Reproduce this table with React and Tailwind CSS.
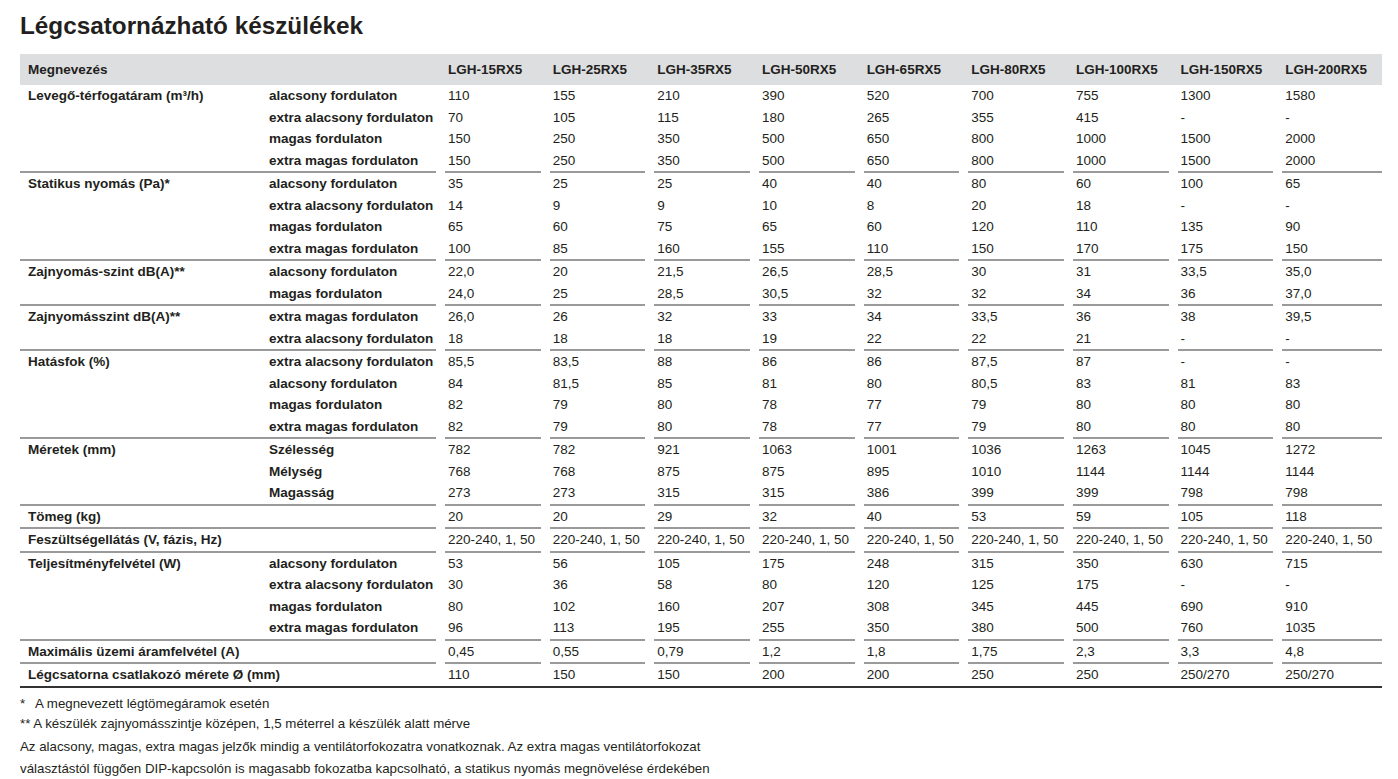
import React from "react";

const MODELS = [
  "LGH-15RX5",
  "LGH-25RX5",
  "LGH-35RX5",
  "LGH-50RX5",
  "LGH-65RX5",
  "LGH-80RX5",
  "LGH-100RX5",
  "LGH-150RX5",
  "LGH-200RX5",
];

const SPEEDS = [
  "alacsony fordulaton",
  "extra alacsony fordulaton",
  "magas fordulaton",
  "extra magas fordulaton",
];

// values: one array per model, in the order of the sub labels
const GROUPS = [
  {
    label: "Levegő-térfogatáram (m³/h)",
    subs: SPEEDS,
    values: [
      ["110", "70", "150", "150"],
      ["155", "105", "250", "250"],
      ["210", "115", "350", "350"],
      ["390", "180", "500", "500"],
      ["520", "265", "650", "650"],
      ["700", "355", "800", "800"],
      ["755", "415", "1000", "1000"],
      ["1300", "-", "1500", "1500"],
      ["1580", "-", "2000", "2000"],
    ],
  },
  {
    label: "Statikus nyomás (Pa)*",
    subs: SPEEDS,
    values: [
      ["35", "14", "65", "100"],
      ["25", "9", "60", "85"],
      ["25", "9", "75", "160"],
      ["40", "10", "65", "155"],
      ["40", "8", "60", "110"],
      ["80", "20", "120", "150"],
      ["60", "18", "110", "170"],
      ["100", "-", "135", "175"],
      ["65", "-", "90", "150"],
    ],
  },
  {
    label: "Zajnyomás-szint dB(A)**",
    subs: ["alacsony fordulaton", "magas fordulaton"],
    values: [
      ["22,0", "24,0"],
      ["20", "25"],
      ["21,5", "28,5"],
      ["26,5", "30,5"],
      ["28,5", "32"],
      ["30", "32"],
      ["31", "34"],
      ["33,5", "36"],
      ["35,0", "37,0"],
    ],
  },
  {
    label: "Zajnyomásszint dB(A)**",
    subs: ["extra magas fordulaton", "extra alacsony fordulaton"],
    values: [
      ["26,0", "18"],
      ["26", "18"],
      ["32", "18"],
      ["33", "19"],
      ["34", "22"],
      ["33,5", "22"],
      ["36", "21"],
      ["38", "-"],
      ["39,5", "-"],
    ],
  },
  {
    label: "Hatásfok (%)",
    subs: [
      "extra alacsony fordulaton",
      "alacsony fordulaton",
      "magas fordulaton",
      "extra magas fordulaton",
    ],
    values: [
      ["85,5", "84", "82", "82"],
      ["83,5", "81,5", "79", "79"],
      ["88", "85", "80", "80"],
      ["86", "81", "78", "78"],
      ["86", "80", "77", "77"],
      ["87,5", "80,5", "79", "79"],
      ["87", "83", "80", "80"],
      ["-", "81", "80", "80"],
      ["-", "83", "80", "80"],
    ],
  },
  {
    label: "Méretek (mm)",
    subs: ["Szélesség", "Mélység", "Magasság"],
    values: [
      ["782", "768", "273"],
      ["782", "768", "273"],
      ["921", "875", "315"],
      ["1063", "875", "315"],
      ["1001", "895", "386"],
      ["1036", "1010", "399"],
      ["1263", "1144", "399"],
      ["1045", "1144", "798"],
      ["1272", "1144", "798"],
    ],
  },
  {
    label: "Tömeg (kg)",
    subs: [],
    values: ["20", "20", "29", "32", "40", "53", "59", "105", "118"].map((v) => [v]),
  },
  {
    label: "Feszültségellátás (V, fázis, Hz)",
    subs: [],
    values: MODELS.map(() => ["220-240, 1, 50"]),
  },
  {
    label: "Teljesítményfelvétel (W)",
    subs: SPEEDS,
    values: [
      ["53", "30", "80", "96"],
      ["56", "36", "102", "113"],
      ["105", "58", "160", "195"],
      ["175", "80", "207", "255"],
      ["248", "120", "308", "350"],
      ["315", "125", "345", "380"],
      ["350", "175", "445", "500"],
      ["630", "-", "690", "760"],
      ["715", "-", "910", "1035"],
    ],
  },
  {
    label: "Maximális üzemi áramfelvétel (A)",
    subs: [],
    values: ["0,45", "0,55", "0,79", "1,2", "1,8", "1,75", "2,3", "3,3", "4,8"].map((v) => [v]),
  },
  {
    label: "Légcsatorna csatlakozó mérete Ø (mm)",
    subs: [],
    values: ["110", "150", "150", "200", "200", "250", "250", "250/270", "250/270"].map((v) => [v]),
  },
];

// first eight model columns are fixed, the last one takes what is left
const colWidth = (i) => (i < MODELS.length - 1 ? "w-[95.67px] flex-shrink-0" : "flex-1");

const GroupRow = ({ group, last }) => {
  const line = last ? "" : "border-b-2 border-[#9a9a9a]";
  return (
    <div className="flex gap-[9px]">
      <div className={`w-[416px] flex-shrink-0 flex pl-2 font-bold ${line}`}>
        <div className="w-[241px] flex-shrink-0 whitespace-nowrap">{group.label}</div>
        <div className="flex flex-col whitespace-nowrap">
          {group.subs.map((s, i) => (
            <div key={i}>{s}</div>
          ))}
        </div>
      </div>
      {group.values.map((col, ci) => (
        <div key={ci} className={`${colWidth(ci)} flex flex-col pl-[3px] whitespace-nowrap ${line}`}>
          {col.map((v, vi) => (
            <div key={vi}>{v}</div>
          ))}
        </div>
      ))}
    </div>
  );
};

export default function App() {
  return (
    <div className="w-[1398px] h-[779px] overflow-hidden bg-white px-5 pt-3 text-[#231f20] font-['Liberation_Sans',Arial,sans-serif]">
      <h1 className="text-[24.3px] leading-[28px] font-bold">Légcsatornázható készülékek</h1>

      <div className="mt-[14px] w-[1362px] text-[13.5px] leading-[21.5px] border-b-2 border-[#333]">
        {/* header */}
        <div className="flex gap-[9px] h-[31px] items-center bg-[#dddee0] font-bold">
          <div className="w-[416px] flex-shrink-0 pl-2">Megnevezés</div>
          {MODELS.map((m, i) => (
            <div key={m} className={`${colWidth(i)} pl-[3px] whitespace-nowrap`}>
              {m}
            </div>
          ))}
        </div>

        {GROUPS.map((g, i) => (
          <GroupRow key={g.label} group={g} last={i === GROUPS.length - 1} />
        ))}
      </div>

      {/* footnotes */}
      <div className="mt-[6px] text-[13.3px]">
        <p className="leading-[20px] flex">
          <span className="w-[15px]">*</span>A megnevezett légtömegáramok esetén
        </p>
        <p className="leading-[20px]">** A készülék zajnyomásszintje középen, 1,5 méterrel a készülék alatt mérve</p>
        <p className="mt-[2px] leading-[22px]">
          Az alacsony, magas, extra magas jelzők mindig a ventilátorfokozatra vonatkoznak. Az extra magas ventilátorfokozat
          <br />
          választástól függően DIP-kapcsolón is magasabb fokozatba kapcsolható, a statikus nyomás megnövelése érdekében
        </p>
      </div>
    </div>
  );
}
